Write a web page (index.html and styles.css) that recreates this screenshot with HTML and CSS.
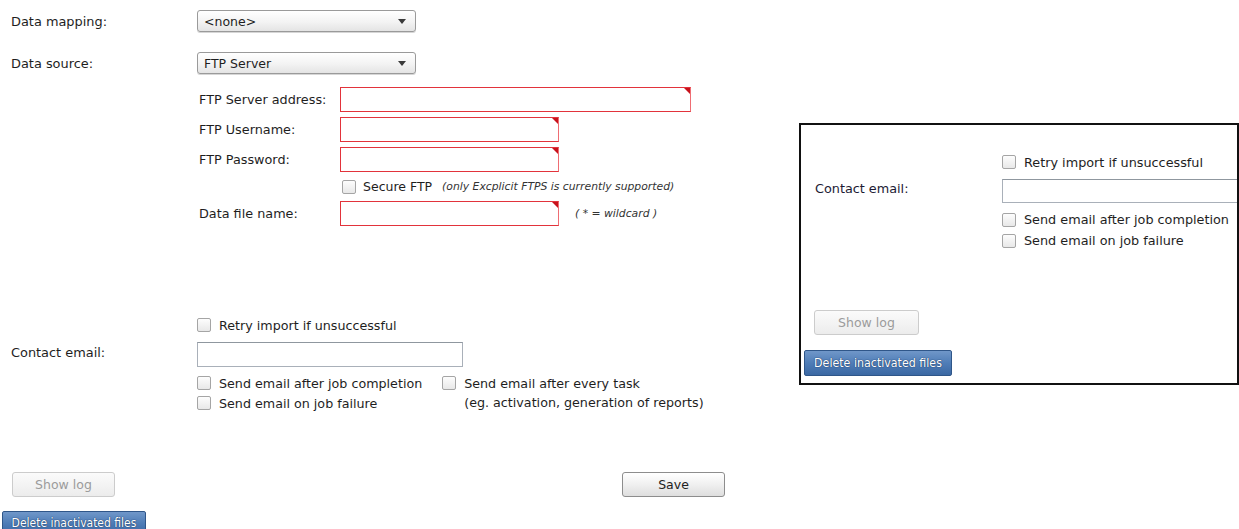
FILE: index.html
```html
<!DOCTYPE html>
<html lang="en">
<head>
<meta charset="utf-8">
<title>Import settings</title>
<link rel="stylesheet" href="styles.css">
</head>
<body>
<div class="page">
  <form class="form">
    <div class="field-row row-mapping">
      <label class="label">Data mapping:</label>
      <div class="select"><span>&lt;none&gt;</span><i class="caret"></i></div>
    </div>
    <div class="field-row row-source">
      <label class="label">Data source:</label>
      <div class="select"><span>FTP Server</span><i class="caret"></i></div>
    </div>

    <div class="ftp">
      <label class="ftp-label">FTP Server address:</label>
      <div class="ftp-ctl"><div class="req wide"></div></div>
      <label class="ftp-label">FTP Username:</label>
      <div class="ftp-ctl"><div class="req"></div></div>
      <label class="ftp-label">FTP Password:</label>
      <div class="ftp-ctl"><div class="req"></div></div>
      <span></span>
      <div class="ftp-ctl secure">
        <span class="check"></span><span class="secure-text">Secure FTP</span>
        <em class="note">(only Excplicit FTPS is currently supported)</em>
      </div>
      <label class="ftp-label">Data file name:</label>
      <div class="ftp-ctl"><div class="req"></div><em class="note wildcard">( * = wildcard )</em></div>
    </div>

    <div class="lower">
      <div class="opt retry"><span class="check"></span>Retry import if unsuccessful</div>
      <div class="contact">
        <label class="label">Contact email:</label>
        <div class="email"></div>
      </div>
      <div class="notify">
        <div class="notify-col">
          <div class="opt"><span class="check"></span>Send email after job completion</div>
          <div class="opt"><span class="check"></span>Send email on job failure</div>
        </div>
        <div class="notify-col task">
          <div class="opt"><span class="check"></span>Send email after every task</div>
          <div class="opt-sub">(eg. activation, generation of reports)</div>
        </div>
      </div>
    </div>

    <div class="actions">
      <button type="button" class="btn btn-disabled">Show log</button>
      <button type="button" class="btn btn-save">Save</button>
    </div>
    <button type="button" class="btn-blue">Delete inactivated files</button>
  </form>

  <aside class="inset">
    <div class="inset-grid">
      <span></span>
      <div class="opt"><span class="check"></span>Retry import if unsuccessful</div>
      <label class="inset-label">Contact email:</label>
      <div class="email inset-email"></div>
      <span></span>
      <div class="inset-notify">
        <div class="opt"><span class="check"></span>Send email after job completion</div>
        <div class="opt"><span class="check"></span>Send email on job failure</div>
      </div>
    </div>
    <button type="button" class="btn btn-disabled inset-log">Show log</button>
    <button type="button" class="btn-blue inset-delete">Delete inactivated files</button>
  </aside>
</div>
</body>
</html>
```

FILE: styles.css
```css
html, body {
  margin: 0;
  padding: 0;
  background: #ffffff;
}

body {
  font-family: "DejaVu Sans", Verdana, sans-serif;
  font-size: 12.7px;
  color: #1e1e1e;
  overflow: hidden;
}

.page {
  display: flex;
  align-items: flex-start;
  height: 529px;
}

/* left-hand settings form */
.form {
  width: 799px;
  flex: none;
  padding-top: 10px;
  box-sizing: border-box;
}

.field-row {
  display: grid;
  grid-template-columns: 197px auto;
  align-items: center;
  height: 22px;
}

.row-source {
  margin-top: 20px;
}

.label {
  padding-left: 11px;
  font-size: 12.9px;
  color: #1e1e1e;
}

.select {
  width: 219px;
  height: 22px;
  box-sizing: border-box;
  border: 1px solid #9a9a9a;
  border-radius: 3px;
  background: linear-gradient(#ffffff, #f3f3f3 55%, #e4e4e4);
  display: flex;
  align-items: center;
  justify-content: space-between;
  padding: 0 9px 0 6px;
  font-size: 12.5px;
  color: #1e1e1e;
  box-shadow: 0 1px 0 #d6d6d6;
}

.caret {
  width: 0;
  height: 0;
  border-left: 4px solid transparent;
  border-right: 4px solid transparent;
  border-top: 5px solid #3a3a3a;
}

/* FTP connection details */
.ftp {
  margin: 13px 0 0 197px;
  display: grid;
  grid-template-columns: 143px auto;
  row-gap: 5px;
  align-items: center;
}

.ftp-label {
  padding-left: 2px;
  font-size: 12.8px;
  color: #1e1e1e;
}

.ftp-ctl {
  display: flex;
  align-items: center;
}

.req {
  position: relative;
  width: 219px;
  height: 25px;
  box-sizing: border-box;
  border: 1px solid #e2333b;
  border-right-color: #ef6d73;
  background: #fff;
}

.req.wide {
  width: 351px;
}

/* required-field corner marker */
.req::after {
  content: "";
  position: absolute;
  top: 0;
  right: 0;
  width: 0;
  height: 0;
  border-top: 6px solid #c7121c;
  border-left: 6px solid transparent;
}

.secure {
  height: 19px;
  padding-left: 2px;
}

.secure-text {
  margin-left: 7px;
  font-size: 12.5px;
}

.note {
  font-style: italic;
  font-size: 10.8px;
  color: #333;
  margin-left: 10px;
}

.wildcard {
  margin-left: 16px;
}

.check {
  display: inline-block;
  flex: none;
  width: 14px;
  height: 14px;
  box-sizing: border-box;
  border: 1px solid #a5a5a5;
  border-radius: 2px;
  background: linear-gradient(#fdfdfd, #e8e8e8);
}

/* contact + notification options */
.lower {
  margin-top: 90px;
}

.opt {
  display: flex;
  align-items: center;
  height: 19px;
  white-space: nowrap;
}

.opt .check {
  margin-right: 8px;
}

.retry {
  margin-left: 197px;
  height: 18px;
}

.contact {
  margin-top: 8px;
  display: grid;
  grid-template-columns: 197px auto;
  align-items: start;
}

.contact .label {
  font-size: 12.9px;
  padding-top: 3px;
}

.email {
  width: 266px;
  height: 25px;
  box-sizing: border-box;
  border: 1px solid #a9b0b9;
  border-top-color: #8f979f;
  background: #fff;
}

.notify {
  margin: 6px 0 0 197px;
  display: flex;
}

.notify-col .opt {
  height: 20px;
}

.task {
  margin-left: 20px;
}

.opt-sub {
  padding-left: 22px;
  height: 19px;
  line-height: 19px;
}

/* buttons */
.actions {
  margin: 59px 0 0 12px;
  width: 713px;
  display: flex;
  justify-content: space-between;
}

.btn {
  width: 103px;
  height: 25px;
  padding: 0;
  border-radius: 3px;
  font-family: "DejaVu Sans", Verdana, sans-serif;
  font-size: 12.5px;
}

.btn-disabled {
  border: 1px solid #cccccc;
  background: linear-gradient(#fbfbfb, #ececec);
  color: #9b9b9b;
}

.btn-save {
  border: 1px solid #8d8d8d;
  background: linear-gradient(#ffffff, #f0f0f0 50%, #dedede);
  color: #222;
}

.btn-blue {
  display: block;
  margin: 14px 0 0 2px;
  width: 144px;
  height: 24px;
  padding: 0;
  border: 1px solid #2f5689;
  border-radius: 2px;
  background: linear-gradient(#7097c9, #4f7db7 50%, #3b68a3);
  color: #ffffff;
  font-family: "DejaVu Sans Condensed", "DejaVu Sans", sans-serif;
  font-size: 12px;
  text-shadow: 0 0 1px #1d3b66, 0 0 1px #1d3b66;
}

/* boxed panel on the right */
.inset {
  flex: 1;
  margin-top: 123px;
  height: 262px;
  box-sizing: border-box;
  border: 2px solid #111111;
  overflow: hidden;
  font-size: 12.8px;
}

.inset-grid {
  margin-top: 27px;
  display: grid;
  grid-template-columns: 201px 300px;
  align-items: center;
}

.inset-grid .opt {
  height: 20px;
}

.inset-label {
  padding-left: 14px;
  color: #1c1a33;
  align-self: start;
  padding-top: 9px;
}

.inset-email {
  width: 300px;
  height: 24px;
  margin-top: 7px;
  margin-bottom: 6px;
  align-self: start;
}

.inset-notify .opt {
  height: 21px;
}

.inset-log {
  display: block;
  margin: 59px 0 0 13px;
  width: 105px;
}

.inset-delete {
  margin: 15px 0 0 3px;
  width: 148px;
  height: 26px;
  font-size: 12.3px;
}
```
